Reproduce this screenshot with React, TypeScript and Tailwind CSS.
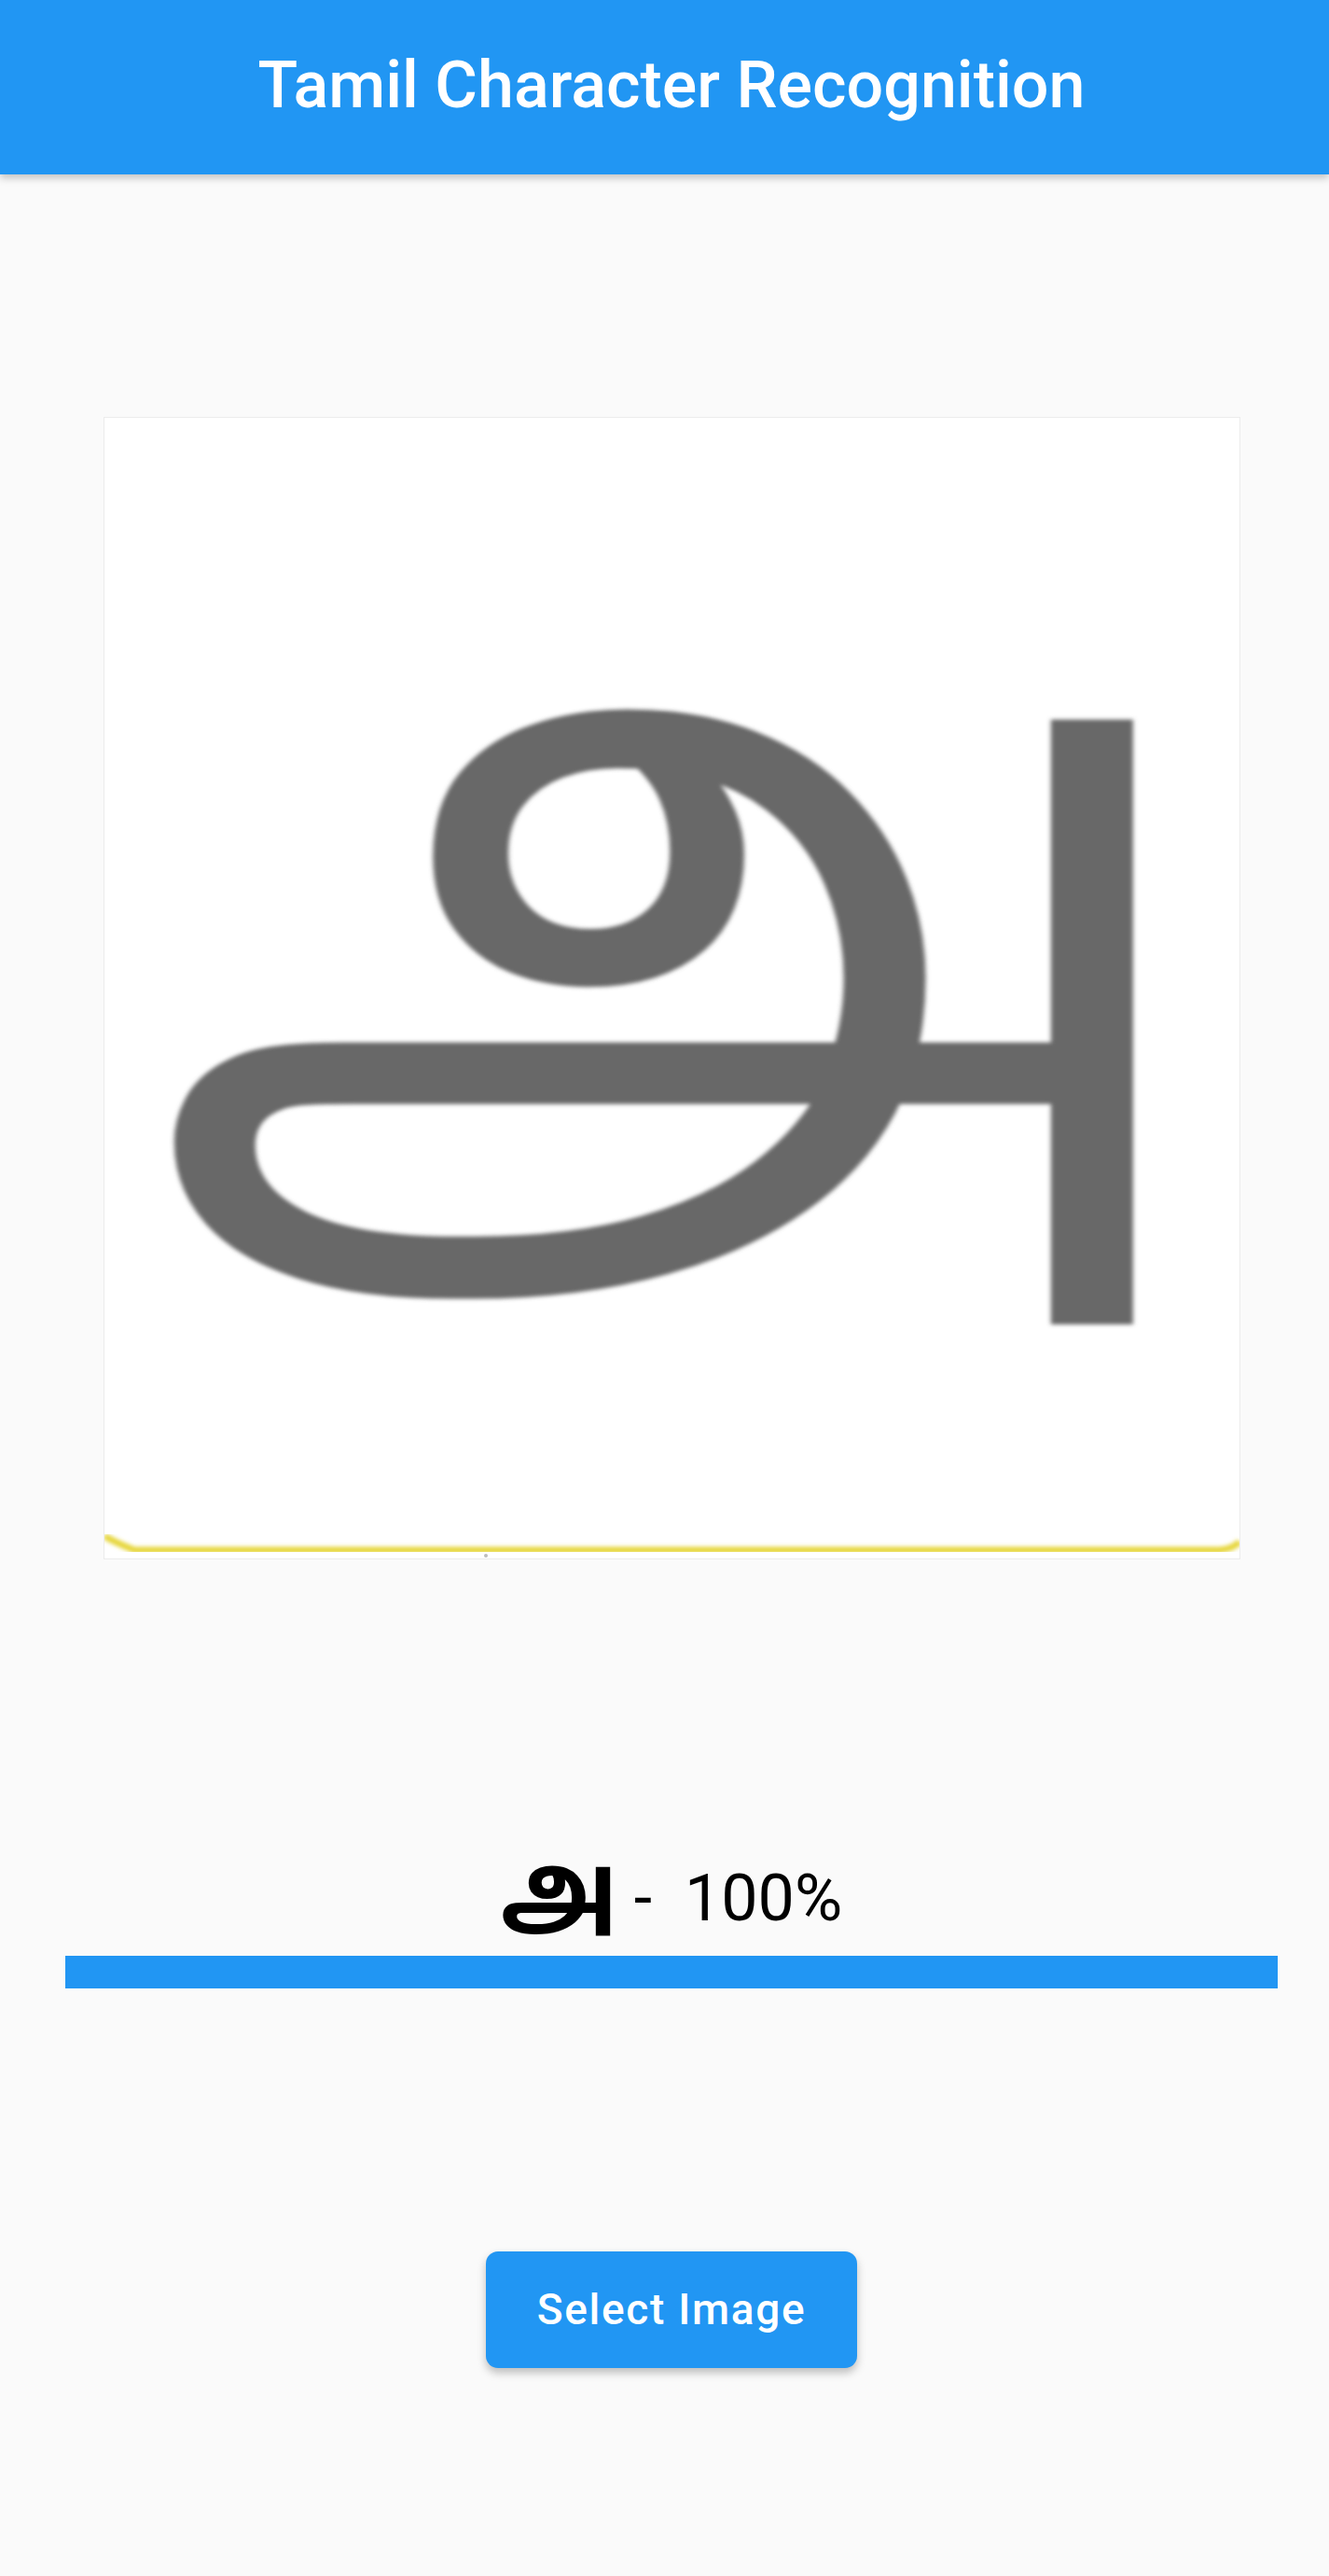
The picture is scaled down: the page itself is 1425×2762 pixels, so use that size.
const blue = "bg-[#2196F3]";
const tamil = '"Noto Sans Tamil", "Lohit Tamil", "Noto Sans", sans-serif';

const LetterImage = () => {
  return (
    <div className="w-[1219px] h-[1225px] bg-white border border-[#ececec] overflow-hidden">
      <svg width="1217" height="1223" viewBox="0 0 1217 1223">
        <defs>
          <filter id="soft">
            <feGaussianBlur stdDeviation="2.2" />
          </filter>
        </defs>
        <g transform="translate(619 831) scale(1.118 1)">
          <text
            x="0"
            y="0"
            textAnchor="middle"
            fontSize="916"
            fill="#686868"
            filter="url(#soft)"
            style={{ fontFamily: tamil }}
          >
            அ
          </text>
        </g>
        <path
          d="M0 1199 Q12 1206 32 1214 L1195 1214 Q1210 1213 1217 1205"
          fill="none"
          stroke="#e6d63a"
          strokeWidth="7"
          filter="url(#soft)"
        />
        <circle cx="409" cy="1220" r="2" fill="#bdbdbd" />
      </svg>
    </div>
  );
};

export default function App() {
  return (
    <div className="min-h-screen bg-[#fafafa] font-['Roboto',sans-serif]">
      <header className={`${blue} h-[187px] flex items-center justify-center pl-[15px] pb-[5px] shadow-[0_4px_8px_rgba(0,0,0,0.22)] relative z-10`}>
        <h1 className="text-white text-[70px] font-medium leading-none">Tamil Character Recognition</h1>
      </header>

      <main className="flex flex-col items-center pl-[15px] pb-[223px]">
        <div className="mt-[260px]">
          <LetterImage />
        </div>

        <p className="mt-[322px] h-[82px] text-[70px] leading-[82px] text-black whitespace-pre">
          <span className="text-[103px] font-bold leading-[0px] font-['Noto_Sans_Tamil','Lohit_Tamil',sans-serif]">அ</span>
          {" -  100%"}
        </p>

        <div className={`mt-[21px] w-[1300px] h-[35px] ${blue}`} />

        <button className={`mt-[282px] w-[398px] h-[125px] rounded-[13px] ${blue} text-white text-[46px] font-medium tracking-[1.7px] shadow-[0_5px_10px_rgba(0,0,0,0.25)]`}>
          Select Image
        </button>
      </main>
    </div>
  );
}
